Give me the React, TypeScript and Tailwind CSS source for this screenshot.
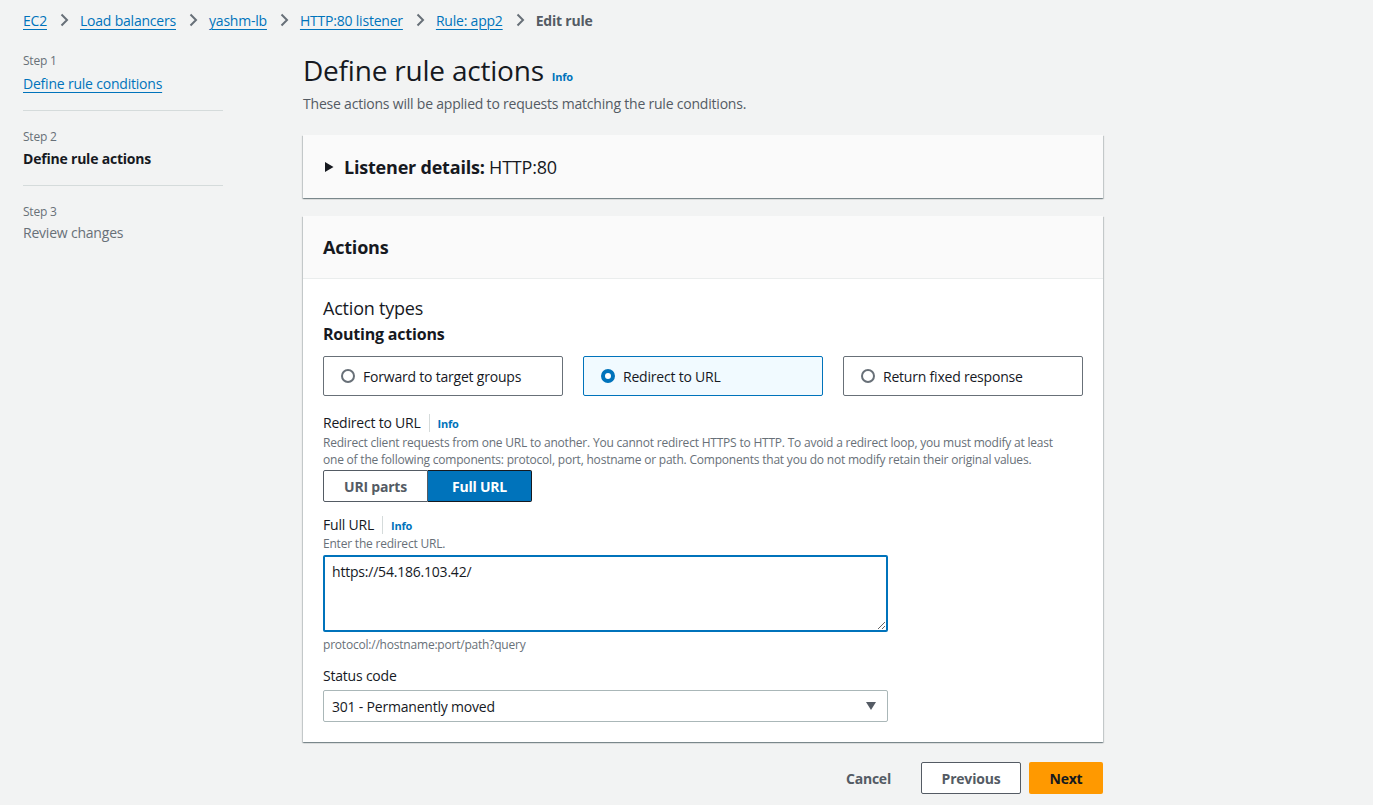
import { useState } from "react";

const font = { fontFamily: '"Open Sans", "Noto Sans", sans-serif' };

function Chevron() {
  return (
    <svg width="16" height="16" viewBox="0 0 16 16" className="ml-[9px] mr-[8px] text-[#687078]">
      <path d="M5.5 2.5 11 8l-5.5 5.5" fill="none" stroke="currentColor" strokeWidth="2" />
    </svg>
  );
}

function Info() {
  return <span className="text-[11px] font-bold text-[#0073bb] leading-none">Info</span>;
}

function Radio({ checked }: { checked: boolean }) {
  return checked ? (
    <span className="w-[14px] h-[14px] rounded-full border-[4px] border-[#0073bb] bg-white shrink-0" />
  ) : (
    <span className="w-[14px] h-[14px] rounded-full border-[2px] border-[#687078] bg-white shrink-0" />
  );
}

export default function App() {
  const [action, setAction] = useState("redirect");
  const [mode, setMode] = useState("full");
  const [url, setUrl] = useState("https://54.186.103.42/");

  const crumbs = ["EC2", "Load balancers", "yashm-lb", "HTTP:80 listener", "Rule: app2"];
  const tiles = [
    { id: "forward", label: "Forward to target groups" },
    { id: "redirect", label: "Redirect to URL" },
    { id: "fixed", label: "Return fixed response" },
  ];

  return (
    <div className="min-h-[805px] bg-[#f2f3f3] text-[#16191f] tracking-[-0.013em]" style={font}>
      {/* 브레드크럼 */}
      <div className="flex items-center pl-[23px] h-[40px] text-[14px]">
        {crumbs.map((c) => (
          <span key={c} className="flex items-center">
            <a className="text-[#0073bb] underline underline-offset-[3px] decoration-1">{c}</a>
            <Chevron />
          </span>
        ))}
        <span className="font-bold text-[#545b64]">Edit rule</span>
      </div>

      <div className="flex pl-[23px]">
        {/* 단계 네비 */}
        <div className="w-[280px] shrink-0 pt-[12px]">
          <div className="w-[200px]">
            <div className="text-[12px] text-[#687078] leading-[18px]">Step 1</div>
            <a className="block mt-[4px] text-[14px] leading-[20px] text-[#0073bb] underline underline-offset-[3px]">
              Define rule conditions
            </a>
            <div className="border-t border-[#d5dbdb] mt-[16px] mb-[17px]" />
            <div className="text-[12px] text-[#687078] leading-[18px]">Step 2</div>
            <div className="mt-[3px] text-[14px] leading-[20px] font-bold">Define rule actions</div>
            <div className="border-t border-[#d5dbdb] mt-[16px] mb-[17px]" />
            <div className="text-[12px] text-[#687078] leading-[18px]">Step 3</div>
            <div className="mt-[2px] text-[14px] leading-[20px] text-[#687078]">Review changes</div>
          </div>
        </div>

        {/* 메인 */}
        <div className="w-[800px] shrink-0 pt-[12px]">
          <div className="flex items-baseline gap-[8px]">
            <h1 className="text-[28px] leading-[36px]">Define rule actions</h1>
            <Info />
          </div>
          <p className="text-[14px] leading-[20px] text-[#545b64] mt-[6px]">
            These actions will be applied to requests matching the rule conditions.
          </p>

          <div className="mt-[21px] bg-[#fafafa] shadow-[0_1px_1px_0_rgba(0,28,36,0.3),1px_1px_1px_0_rgba(0,28,36,0.15),-1px_1px_1px_0_rgba(0,28,36,0.15)] h-[63px] flex items-center px-[20px]">
            <svg width="12" height="12" viewBox="0 0 12 12" className="mr-[9px]">
              <path d="M2 1 10.5 6 2 11z" fill="#16191f" />
            </svg>
            <span className="text-[18px] leading-[22px]">
              <b>Listener details:</b> HTTP:80
            </span>
          </div>

          <div className="mt-[18px] bg-white shadow-[0_1px_1px_0_rgba(0,28,36,0.3),1px_1px_1px_0_rgba(0,28,36,0.15),-1px_1px_1px_0_rgba(0,28,36,0.15)]">
            <div className="h-[63px] bg-[#fafafa] border-b border-[#eaeded] flex items-center px-[20px]">
              <h2 className="text-[18px] font-bold">Actions</h2>
            </div>
            <div className="px-[20px] pt-[17px] pb-[20px]">
              <div className="text-[18px] leading-[24px]">Action types</div>
              <div className="text-[16px] leading-[22px] font-bold mt-[3px]">Routing actions</div>

              <div className="grid grid-cols-3 gap-[20px] mt-[11px]">
                {tiles.map((t) => {
                  const on = action === t.id;
                  return (
                    <button
                      key={t.id}
                      onClick={() => setAction(t.id)}
                      className={`h-[40px] flex items-center gap-[8px] px-[17px] border text-[14px] text-left rounded-[2px] ${
                        on ? "border-[#0073bb] bg-[#f1faff]" : "border-[#687078] bg-white"
                      }`}
                    >
                      <Radio checked={on} />
                      {t.label}
                    </button>
                  );
                })}
              </div>

              <div className="flex items-center mt-[17px] text-[14px] leading-[20px]">
                <span>Redirect to URL</span>
                <span className="h-[18px] border-l border-[#d5dbdb] mx-[8px]" />
                <Info />
              </div>
              <p className="max-w-[748px] text-[12px] leading-[17px] text-[#687078] mt-[1px]">
                Redirect client requests from one URL to another. You cannot redirect HTTPS to HTTP. To avoid a redirect loop, you
                must modify at least one of the following components: protocol, port, hostname or path. Components that you do not
                modify retain their original values.
              </p>

              <div className="flex mt-[2px] h-[32px] text-[14px] font-bold">
                <button
                  onClick={() => setMode("parts")}
                  className={`w-[105px] border border-[#545b64] rounded-l-[2px] ${
                    mode === "parts" ? "bg-[#0073bb] text-white" : "bg-white text-[#545b64]"
                  }`}
                >
                  URI parts
                </button>
                <button
                  onClick={() => setMode("full")}
                  className={`w-[104px] border border-l-0 border-[#16191f] rounded-r-[2px] ${
                    mode === "full" ? "bg-[#0073bb] text-white" : "bg-white text-[#545b64]"
                  }`}
                >
                  Full URL
                </button>
              </div>

              <div className="flex items-center mt-[13px] text-[14px] leading-[20px]">
                <span>Full URL</span>
                <span className="h-[18px] border-l border-[#d5dbdb] mx-[8px]" />
                <Info />
              </div>
              <div className="text-[12px] leading-[17px] text-[#687078]">Enter the redirect URL.</div>
              <textarea
                value={url}
                onChange={(e) => setUrl(e.target.value)}
                className="block w-[565px] h-[77px] mt-[3px] border-2 border-[#0073bb] rounded-[2px] px-[7px] py-[4px] text-[14px] leading-[22px] outline-none bg-white"
              />
              <div className="text-[12px] leading-[17px] text-[#687078] mt-[4px]">protocol://hostname:port/path?query</div>

              <div className="text-[14px] leading-[20px] mt-[13px]">Status code</div>
              <div className="mt-[4px] w-[565px] h-[32px] border border-[#aab7b8] rounded-[2px] flex items-center justify-between px-[8px] text-[14px]">
                <span>301 - Permanently moved</span>
                <svg width="12" height="10" viewBox="0 0 12 10" className="mr-[2px]">
                  <path d="M1 1h10L6 9z" fill="#545b64" />
                </svg>
              </div>
            </div>
          </div>

          {/* 버튼 */}
          <div className="flex justify-end items-center gap-[8px] mt-[20px] text-[14px] font-bold">
            <button className="px-[22px] h-[32px] text-[#545b64]">Cancel</button>
            <button className="w-[100px] h-[32px] border border-[#545b64] bg-white text-[#545b64] rounded-[2px]">Previous</button>
            <button className="w-[74px] h-[32px] bg-[#ff9900] text-[#16191f] rounded-[2px]">Next</button>
          </div>
        </div>
      </div>
    </div>
  );
}
